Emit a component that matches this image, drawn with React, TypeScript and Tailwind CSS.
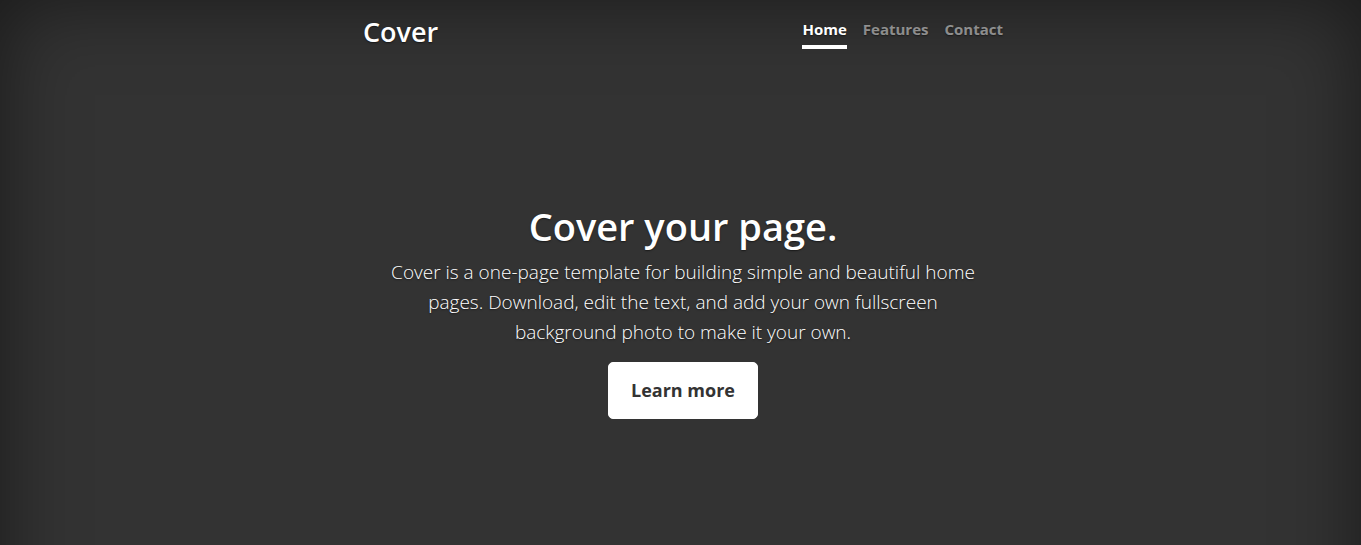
import React from 'react';

const navItems = [
  { label: 'Home', active: true },
  { label: 'Features', active: false },
  { label: 'Contact', active: false },
];

const App: React.FC = () => {
  return (
    <div
      className="h-[640px] w-full bg-[#333333] pl-[5px] text-white shadow-[inset_0_0_5rem_rgba(0,0,0,0.5)] [text-shadow:0_0.05rem_0.1rem_rgba(0,0,0,0.5)]"
      style={{ fontFamily: '"Open Sans", "Noto Sans", sans-serif' }}
    >
      <div className="mx-auto flex w-full max-w-[672px] flex-col px-4 pt-[13px]">
        {/* Masthead */}
        <header className="flex items-start justify-between">
          <h3 className="mt-[3px] text-[27px] font-semibold leading-[1.2]">Cover</h3>
          <nav className="flex gap-4">
            {navItems.map((item) => (
              <a
                key={item.label}
                href="#"
                className={`border-b-4 py-1 text-[15px] font-bold leading-6 ${
                  item.active
                    ? 'border-white text-white'
                    : 'border-transparent text-white/50 hover:text-white'
                }`}
              >
                {item.label}
              </a>
            ))}
          </nav>
        </header>

        {/* Main */}
        <main className="mt-[154px] flex flex-col items-center px-4 text-center">
          <h1 className="mb-2 text-[38px] font-semibold leading-[46px]">Cover your page.</h1>
          <p className="mb-[15px] text-[19px] font-light leading-[30px]">
            Cover is a one-page template for building simple and beautiful home pages. Download, edit
            the text, and add your own fullscreen background photo to make it your own.
          </p>
          <a
            href="#"
            className="rounded-[5px] border border-white bg-white px-[22px] py-3 text-[18px] font-bold leading-[31px] text-[#333333] [text-shadow:none]"
          >
            Learn more
          </a>
        </main>
      </div>
    </div>
  );
};

export default App;
